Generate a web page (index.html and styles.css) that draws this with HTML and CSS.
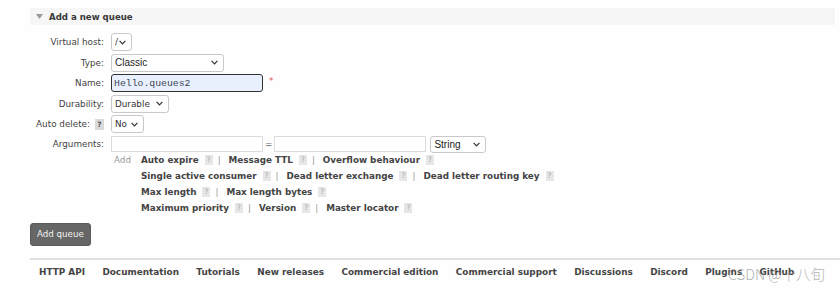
FILE: index.html
```html
<!DOCTYPE html>
<html>
<head>
<meta charset="utf-8">
<link rel="stylesheet" href="styles.css">
</head>
<body>
<div class="page">
  <div class="section-head">
    <svg class="tri" width="7" height="5" viewBox="0 0 7 5"><path d="M0 0 L7 0 L3.5 5 Z" fill="#9a9a9a"/></svg>
    <span>Add a new queue</span>
  </div>

  <div class="form">
    <div class="label">Virtual host:</div>
    <div class="ctl">
      <span class="sel w-vhost"><select><option>/</option></select><svg class="chev" width="7" height="5" viewBox="0 0 7 5"><path d="M0.6 0.8 L3.5 3.8 L6.4 0.8" fill="none" stroke="#333" stroke-width="1.2"/></svg></span>
    </div>

    <div class="label">Type:</div>
    <div class="ctl">
      <span class="sel sys w-type"><select><option>Classic</option></select><svg class="chev" width="7" height="5" viewBox="0 0 7 5"><path d="M0.6 0.8 L3.5 3.8 L6.4 0.8" fill="none" stroke="#333" stroke-width="1.2"/></svg></span>
    </div>

    <div class="label">Name:</div>
    <div class="ctl">
      <input class="name-input" type="text" value="Hello.queues2">
      <span class="req">*</span>
    </div>

    <div class="label">Durability:</div>
    <div class="ctl">
      <span class="sel w-dur"><select><option>Durable</option></select><svg class="chev" width="7" height="5" viewBox="0 0 7 5"><path d="M0.6 0.8 L3.5 3.8 L6.4 0.8" fill="none" stroke="#333" stroke-width="1.2"/></svg></span>
    </div>

    <div class="label">Auto delete: <span class="help dark">?</span></div>
    <div class="ctl">
      <span class="sel w-no"><select><option>No</option></select><svg class="chev" width="7" height="5" viewBox="0 0 7 5"><path d="M0.6 0.8 L3.5 3.8 L6.4 0.8" fill="none" stroke="#333" stroke-width="1.2"/></svg></span>
    </div>

    <div class="label label-top">Arguments:</div>
    <div class="ctl args">
      <div class="args-row">
        <input class="arg-input" type="text">
        <span class="eq">=</span>
        <input class="arg-input" type="text">
        <span class="sel sys w-str small"><select><option>String</option></select><svg class="chev" width="7" height="5" viewBox="0 0 7 5"><path d="M0.6 0.8 L3.5 3.8 L6.4 0.8" fill="none" stroke="#333" stroke-width="1.2"/></svg></span>
      </div>
      <div class="args-help">
        <span class="add">Add</span>
        <div class="arg-lines">
          <div class="line"><span class="arg">Auto expire</span><span class="help">?</span><span class="sep">|</span><span class="arg">Message TTL</span><span class="help">?</span><span class="sep">|</span><span class="arg">Overflow behaviour</span><span class="help">?</span></div>
          <div class="line"><span class="arg">Single active consumer</span><span class="help">?</span><span class="sep">|</span><span class="arg">Dead letter exchange</span><span class="help">?</span><span class="sep">|</span><span class="arg">Dead letter routing key</span><span class="help">?</span></div>
          <div class="line"><span class="arg">Max length</span><span class="help">?</span><span class="sep">|</span><span class="arg">Max length bytes</span><span class="help">?</span></div>
          <div class="line"><span class="arg">Maximum priority</span><span class="help">?</span><span class="sep">|</span><span class="arg">Version</span><span class="help">?</span><span class="sep">|</span><span class="arg">Master locator</span><span class="help">?</span></div>
        </div>
      </div>
    </div>
  </div>

  <div class="actions"><button class="btn">Add queue</button></div>

  <div class="footer">
    <a>HTTP API</a>
    <a>Documentation</a>
    <a>Tutorials</a>
    <a>New releases</a>
    <a>Commercial edition</a>
    <a>Commercial support</a>
    <a>Discussions</a>
    <a>Discord</a>
    <a>Plugins</a>
    <a>GitHub</a>
  </div>

  <div class="watermark">CSDN @十八旬</div>
</div>
</body>
</html>
```

FILE: styles.css
```css
html, body {
  margin: 0;
  padding: 0;
  background: #fefefe;
}

body {
  font-family: "DejaVu Sans", Verdana, sans-serif;
  font-size: 8.8px;
  color: #444;
}

.page {
  position: relative;
  height: 292px;
  box-sizing: border-box;
  padding: 8px 5px 0 30px;
  overflow: hidden;
}

.section-head {
  height: 17px;
  background: #f6f6f6;
  display: flex;
  align-items: center;
  gap: 6px;
  padding-left: 6px;
  font-weight: bold;
  font-size: 8.6px;
  color: #383838;
}

.form {
  display: grid;
  grid-template-columns: 74px auto;
  column-gap: 7px;
  row-gap: 2.5px;
  margin-top: 8px;
  align-items: center;
}

.label {
  display: flex;
  justify-content: flex-end;
  align-items: center;
  gap: 5px;
  white-space: nowrap;
  color: #444;
}

.label-top {
  align-self: start;
  height: 17px;
}

.ctl {
  display: flex;
  align-items: center;
}

.sel {
  display: inline-flex;
  align-items: center;
  box-sizing: border-box;
  height: 18px;
  border: 1px solid #c9c9c9;
  border-radius: 3px;
  background: #fff;
  padding: 0 5px 0 3px;
}

.sel select {
  appearance: none;
  -webkit-appearance: none;
  border: 0;
  background: transparent;
  padding: 0;
  margin: 0;
  flex: 1;
  min-width: 0;
  font-family: "DejaVu Sans", Verdana, sans-serif;
  font-size: 8.8px;
  color: #333;
  outline: none;
}

.sel.sys select {
  font-family: "Liberation Sans", Arial, sans-serif;
  font-size: 10px;
  color: #222;
}

.sel.small {
  height: 17px;
}

.chev {
  flex: none;
}

.w-vhost { width: 21px; }
.w-type { width: 113px; }
.w-dur { width: 58px; }
.w-no { width: 33px; }
.w-str { width: 56px; }

.name-input {
  box-sizing: border-box;
  width: 152px;
  height: 18px;
  border: 1px solid #333;
  border-radius: 3px;
  background: #e8f0fe;
  padding: 0 2px;
  font-family: "Liberation Mono", "Courier New", monospace;
  font-size: 9.8px;
  color: #3d4455;
  outline: none;
}

.req {
  color: #e05a5a;
  font-size: 9px;
  margin-left: 6px;
  margin-top: -5px;
}

.args {
  flex-direction: column;
  align-items: flex-start;
}

.args-row {
  display: flex;
  align-items: center;
}

.arg-input {
  box-sizing: border-box;
  width: 152px;
  height: 16px;
  border: 1px solid #dcdcdc;
  background: #fff;
  padding: 0 2px;
  margin: 0;
  outline: none;
}

.eq {
  margin: 0 2px;
  color: #666;
}

.w-str {
  margin-left: 4px;
}

.args-help {
  display: flex;
  margin-top: -1px;
  line-height: 16px;
}

.add {
  width: 27px;
  padding-left: 3px;
  color: #999;
}

.arg-lines {
  display: flex;
  flex-direction: column;
}

.line {
  display: flex;
  align-items: center;
  height: 16px;
  white-space: nowrap;
}

.arg {
  font-weight: bold;
  color: #444;
}

.help {
  display: inline-block;
  width: 8px;
  height: 10px;
  line-height: 10px;
  text-align: center;
  font-size: 7.5px;
  background: #e6e6e6;
  color: #aaa;
  margin: 0 5px 0 6px;
}

.help.dark {
  width: 9px;
  height: 11px;
  line-height: 11px;
  background: #dadada;
  color: #555;
  margin: 0;
  font-weight: bold;
}

.sep {
  color: #999;
  margin-right: 8px;
}

.actions {
  margin-top: 7px;
}

.btn {
  box-sizing: border-box;
  height: 23px;
  padding: 0 6px;
  background: #666;
  border: 1px solid #5a5a5a;
  border-radius: 3px;
  color: #f2f2f2;
  font-family: "DejaVu Sans", Verdana, sans-serif;
  font-size: 8.7px;
}

.footer {
  margin-top: 12px;
  margin-right: -5px;
  border-top: 2px solid #e0e0e0;
  display: flex;
  gap: 17.4px;
  padding: 5px 0 0 9px;
  line-height: 14px;
}

.footer a {
  font-weight: bold;
  font-size: 8.9px;
  color: #444;
  white-space: nowrap;
}

.watermark {
  position: absolute;
  left: 728px;
  top: 263px;
  font-family: "Noto Sans CJK SC", sans-serif;
  font-size: 14.5px;
  color: rgba(150, 150, 150, 0.75);
  white-space: nowrap;
  font-weight: 300;
}
```
